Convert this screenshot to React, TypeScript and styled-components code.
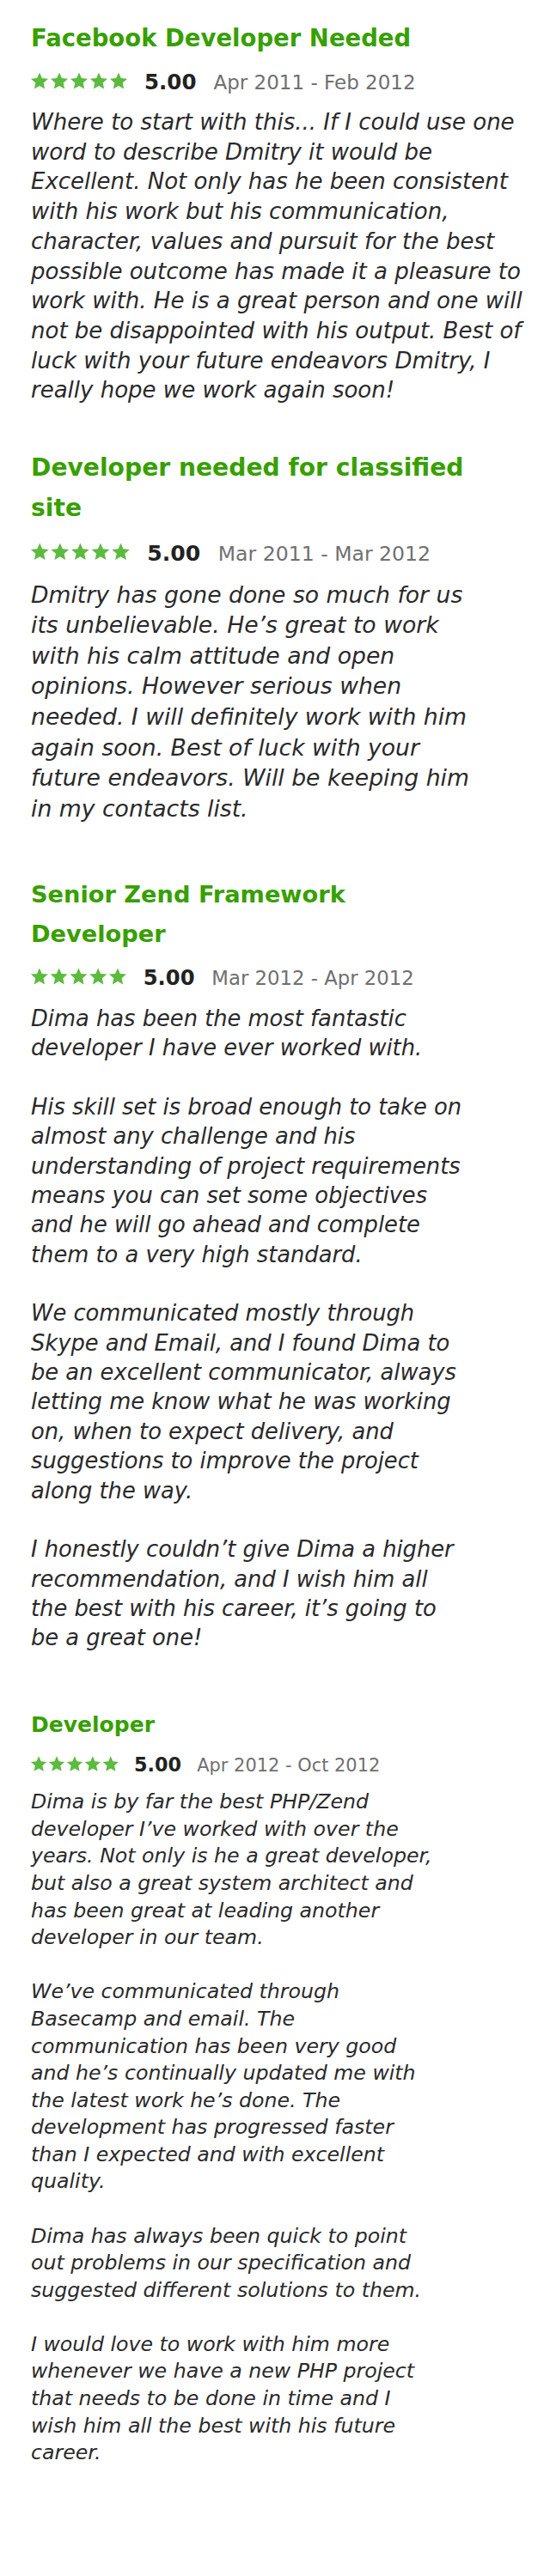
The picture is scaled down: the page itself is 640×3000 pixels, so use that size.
import React from 'react';
import styled, { createGlobalStyle } from 'styled-components';

const GlobalStyle = createGlobalStyle`
  body {
    margin: 0;
    background: #fff;
    font-family: "DejaVu Sans", "Liberation Sans", sans-serif;
  }
`;

type ReviewData = {
    title: string;
    score: string;
    dates: string;
    lines: string[];
    k: number;
    gap: number;
};

const reviews: ReviewData[] = [
    {
        title: 'Facebook Developer Needed',
        score: '5.00',
        dates: 'Apr 2011 - Feb 2012',
        k: 1,
        gap: 0,
        lines: [
            'Where to start with this... If I could use one',
            'word to describe Dmitry it would be',
            'Excellent. Not only has he been consistent',
            'with his work but his communication,',
            'character, values and pursuit for the best',
            'possible outcome has made it a pleasure to',
            'work with. He is a great person and one will',
            'not be disappointed with his output. Best of',
            'luck with your future endeavors Dmitry, I',
            'really hope we work again soon!',
        ],
    },
    {
        title: 'Developer needed for classified\nsite',
        score: '5.00',
        dates: 'Mar 2011 - Mar 2012',
        k: 1.025,
        gap: 49,
        lines: [
            'Dmitry has gone done so much for us',
            'its unbelievable. He’s great to work',
            'with his calm attitude and open',
            'opinions. However serious when',
            'needed. I will definitely work with him',
            'again soon. Best of luck with your',
            'future endeavors. Will be keeping him',
            'in my contacts list.',
        ],
    },
    {
        title: 'Senior Zend Framework\nDeveloper',
        score: '5.00',
        dates: 'Mar 2012 - Apr 2012',
        k: 0.99,
        gap: 60,
        lines: [
            'Dima has been the most fantastic',
            'developer I have ever worked with.',
            '',
            'His skill set is broad enough to take on',
            'almost any challenge and his',
            'understanding of project requirements',
            'means you can set some objectives',
            'and he will go ahead and complete',
            'them to a very high standard.',
            '',
            'We communicated mostly through',
            'Skype and Email, and I found Dima to',
            'be an excellent communicator, always',
            'letting me know what he was working',
            'on, when to expect delivery, and',
            'suggestions to improve the project',
            'along the way.',
            '',
            'I honestly couldn’t give Dima a higher',
            'recommendation, and I wish him all',
            'the best with his career, it’s going to',
            'be a great one!',
        ],
    },
    {
        title: 'Developer',
        score: '5.00',
        dates: 'Apr 2012 - Oct 2012',
        k: 0.91,
        gap: 63,
        lines: [
            'Dima is by far the best PHP/Zend',
            'developer I’ve worked with over the',
            'years. Not only is he a great developer,',
            'but also a great system architect and',
            'has been great at leading another',
            'developer in our team.',
            '',
            'We’ve communicated through',
            'Basecamp and email. The',
            'communication has been very good',
            'and he’s continually updated me with',
            'the latest work he’s done. The',
            'development has progressed faster',
            'than I expected and with excellent',
            'quality.',
            '',
            'Dima has always been quick to point',
            'out problems in our specification and',
            'suggested different solutions to them.',
            '',
            'I would love to work with him more',
            'whenever we have a new PHP project',
            'that needs to be done in time and I',
            'wish him all the best with his future',
            'career.',
        ],
    },
];

// chunky five-point star, 20 wide, repeated every 23 units
const STAR =
    'M10 0.4 L12.9 7 L20.1 7.7 L14.7 12.5 L16.2 19.6 L10 15.9 L3.8 19.6 L5.3 12.5 L-0.1 7.7 L7.1 7 Z';

const Stars = ({ k }: { k: number }) => (
    <StarRow width={112 * k} height={20 * k} viewBox="0 0 112 20">
        {[0, 1, 2, 3, 4].map((i) => (
            <path key={i} transform={`translate(${i * 23} 0)`} d={STAR} />
        ))}
    </StarRow>
);

export default function App() {
    return (
        <Page>
            <GlobalStyle />
            {reviews.map((r) => (
                <Review key={r.dates} $gap={r.gap}>
                    <Title $k={r.k}>{r.title}</Title>
                    <Meta $k={r.k}>
                        <Stars k={r.k} />
                        <Score $k={r.k}>{r.score}</Score>
                        <Dates $k={r.k}>{r.dates}</Dates>
                    </Meta>
                    <Body $k={r.k}>{r.lines.join('\n')}</Body>
                </Review>
            ))}
        </Page>
    );
}

const Page = styled.main`
    display: flex;
    flex-direction: column;
    min-height: 3000px;
    padding: 21px 0 0 36px;
    box-sizing: border-box;
    background: #fff;
`;

const Review = styled.article<{ $gap: number }>`
    display: flex;
    flex-direction: column;
    margin-top: ${({ $gap }) => $gap}px;
`;

const Title = styled.h2<{ $k: number }>`
    margin: 0;
    color: #37a000;
    font-size: ${({ $k }) => 27.5 * $k}px;
    line-height: ${({ $k }) => 46 * $k}px;
    font-weight: 700;
    white-space: pre-line;
`;

const Meta = styled.div<{ $k: number }>`
    display: flex;
    align-items: baseline;
    gap: ${({ $k }) => 20 * $k}px;
    margin-top: ${({ $k }) => 14 * $k}px;
    line-height: ${({ $k }) => 30 * $k}px;
`;

const StarRow = styled.svg`
    fill: #5cbb3f;
    display: block;
    overflow: visible;
`;

const Score = styled.span<{ $k: number }>`
    font-size: ${({ $k }) => 24.5 * $k}px;
    font-weight: 700;
    color: #222;
`;

const Dates = styled.span<{ $k: number }>`
    font-size: ${({ $k }) => 23 * $k}px;
    color: #707070;
`;

const Body = styled.p<{ $k: number }>`
    margin: ${({ $k }) => 14 * $k}px 0 0;
    font-size: ${({ $k }) => 26 * $k}px;
    line-height: ${({ $k }) => 34.7 * $k}px;
    font-style: italic;
    color: #2a2a2a;
    white-space: pre-line;
`;
